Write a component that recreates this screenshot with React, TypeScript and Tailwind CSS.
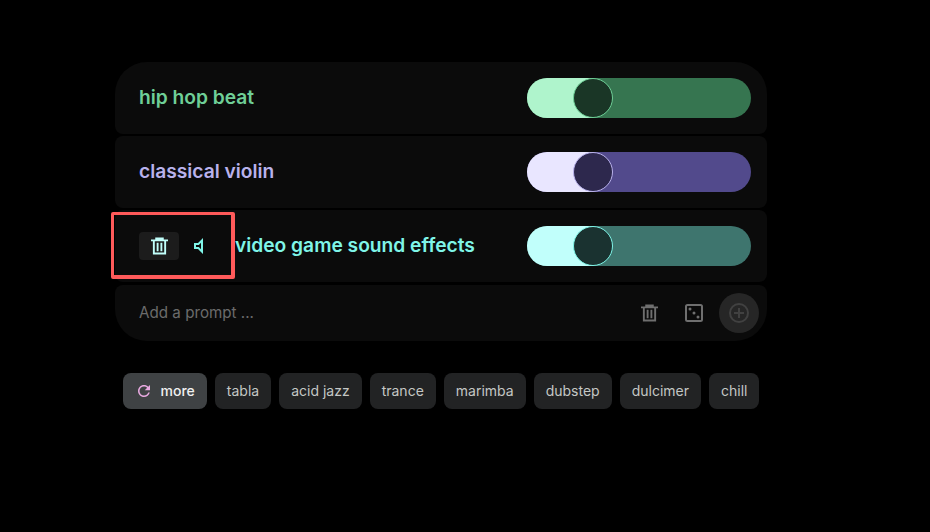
const CHIPS = ["tabla", "acid jazz", "trance", "marimba", "dubstep", "dulcimer", "chill"];

function TrashIcon({ className }: { className: string }) {
  return (
    <svg viewBox="0 0 18 18" fill="none" stroke="currentColor" strokeWidth="2" className={className}>
      <path d="M0 3h18M5.5 3V1h7v2M3 3v14h12V3M7 5.5v9M11 5.5v9" />
    </svg>
  );
}

function MuteIcon({ className }: { className: string }) {
  return (
    <svg viewBox="0 0 24 24" fill="currentColor" className={className}>
      <path d="M14 8.83v6.34L11.83 13H9v-2h2.83L14 8.83M16 4l-5 5H7v6h4l5 5V4z" />
    </svg>
  );
}

function DiceIcon({ className }: { className: string }) {
  return (
    <svg viewBox="0 0 18 18" fill="none" className={className}>
      <rect x="1" y="1" width="16" height="16" rx="1.5" stroke="currentColor" strokeWidth="2" />
      <circle cx="5" cy="5" r="1.5" fill="currentColor" />
      <circle cx="9" cy="9" r="1.5" fill="currentColor" />
      <circle cx="13" cy="13" r="1.5" fill="currentColor" />
    </svg>
  );
}

function RefreshIcon({ className }: { className: string }) {
  return (
    <svg viewBox="0 0 24 24" fill="currentColor" className={className}>
      <path d="M17.65 6.35C16.2 4.9 14.21 4 12 4c-4.42 0-7.99 3.58-7.99 8s3.57 8 7.99 8c3.73 0 6.84-2.55 7.73-6h-2.08c-.82 2.33-3.04 4-5.65 4-3.31 0-6-2.69-6-6s2.69-6 6-6c1.66 0 3.14.69 4.22 1.78L13 11h7V4l-2.35 2.35z" />
    </svg>
  );
}

function PlusCircleIcon({ className }: { className: string }) {
  return (
    <svg viewBox="0 0 20 20" fill="none" stroke="currentColor" strokeWidth="2" className={className}>
      <circle cx="10" cy="10" r="9" />
      <path d="M10 5v10M5 10h10" />
    </svg>
  );
}

export default function App() {
  return (
    <div className="w-[930px] h-[532px] bg-black pt-[62px] pl-[115px] font-['Inter',sans-serif] overflow-hidden">
      <div className="w-[652px] flex flex-col">
        {/* Prompt rows */}
        <div className="h-[72px] mb-[2px] bg-[#0b0b0b] rounded-t-[32px] rounded-b-lg flex items-center justify-between pl-6 pr-4">
          <span className="mb-0.5 text-[19.2px] leading-7 font-semibold text-[#6fcf97]">hip hop beat</span>
          <div className="relative w-[224px] h-10 rounded-full bg-[#367550] overflow-hidden">
            <div className="h-full w-[66px] bg-[#aff4cc]" />
            <div className="absolute left-[46px] top-0 w-10 h-10 rounded-full bg-[#1a3626] border border-[#6fcf97]" />
          </div>
        </div>
        <div className="h-[72px] mb-[2px] bg-[#0b0b0b] rounded-lg flex items-center justify-between pl-6 pr-4">
          <span className="mb-0.5 text-[19.2px] leading-7 font-semibold text-[#b9b2ec]">classical violin</span>
          <div className="relative w-[224px] h-10 rounded-full bg-[#524a8c] overflow-hidden">
            <div className="h-full w-[66px] bg-[#e9e6ff]" />
            <div className="absolute left-[46px] top-0 w-10 h-10 rounded-full bg-[#2d284d] border border-[#b9b2ec]" />
          </div>
        </div>
        <div className="relative h-[72px] mb-[3px] bg-[#0b0b0b] rounded-lg flex items-center justify-between pl-6 pr-4">
          <div className="flex items-center">
            <button className="w-10 h-7 rounded bg-[#1c1c1c] flex items-center justify-center text-[#c1fffb]">
              <TrashIcon className="w-[17px] h-[18px]" />
            </button>
            <button className="w-10 h-7 flex items-center justify-center text-[#7ff5e8]">
              <MuteIcon className="w-6 h-6" />
            </button>
            <span className="ml-4 mb-0.5 text-[19.2px] leading-7 font-semibold text-[#7ff5e8]">video game sound effects</span>
          </div>
          <div className="relative w-[224px] h-10 rounded-full bg-[#3e756e] overflow-hidden">
            <div className="h-full w-[66px] bg-[#c1fffb]" />
            <div className="absolute left-[46px] top-0 w-10 h-10 rounded-full bg-[#1a3230] border border-[#7ff5e8]" />
          </div>
          {/* highlight box */}
          <div className="absolute left-[-4px] top-[2px] w-[124px] h-[67px] border-t-[3px] border-l-[3px] border-r-[4px] border-b-[4px] border-[#ff5a5a] rounded-[2px]" />
        </div>

        {/* Add a prompt */}
        <div className="h-14 bg-[#0b0b0b] rounded-t-lg rounded-b-[32px] flex items-center pl-6 pr-2">
          <span className="flex-1 text-[15.2px] text-[#6b6b6b]">Add a prompt ...</span>
          <TrashIcon className="w-[17px] h-[18px] text-[#6f6f6f]" />
          <DiceIcon className="w-[18px] h-[18px] ml-[27px] text-[#6f6f6f]" />
          <button className="w-10 h-10 ml-4 rounded-full bg-[#262626] flex items-center justify-center text-[#414141]">
            <PlusCircleIcon className="w-5 h-5" />
          </button>
        </div>

        {/* Suggestions */}
        <div className="mt-8 flex justify-center gap-2">
          <button className="h-9 px-3 pb-px rounded-lg bg-[#3f4244] flex items-center gap-2 text-[14px] font-medium text-[#f0f0f0]">
            <RefreshIcon className="w-[18px] h-[18px] text-[#e8a9e0]" />
            more
          </button>
          {CHIPS.map((chip) => (
            <button key={chip} className="h-9 px-3 pb-0.5 rounded-lg bg-[#222324] text-[14px] text-[#c4c7c5]">
              {chip}
            </button>
          ))}
        </div>
      </div>
    </div>
  );
}
